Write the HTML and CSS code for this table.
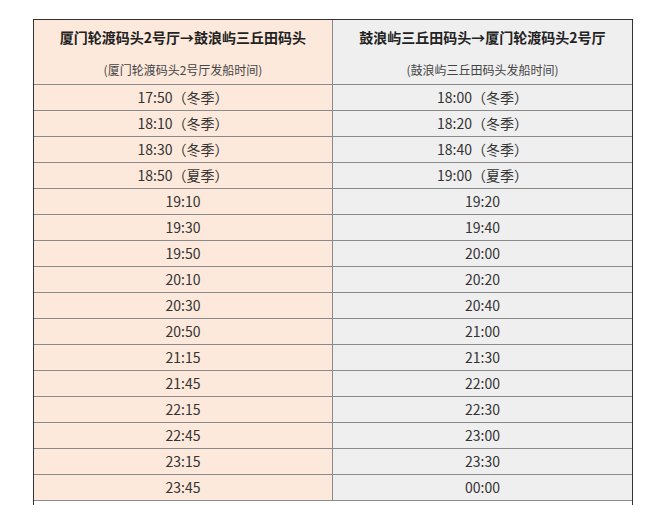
FILE: index.html
```html
<!DOCTYPE html>
<html lang="zh-CN">
<head>
<meta charset="utf-8">
<title>轮渡时刻表</title>
<link rel="stylesheet" href="styles.css">
</head>
<body>
<div class="page">
<table class="schedule">
  <thead>
    <tr>
      <th class="col-a">
        <div class="title">厦门轮渡码头2号厅→鼓浪屿三丘田码头</div>
        <div class="sub">(厦门轮渡码头2号厅发船时间)</div>
      </th>
      <th class="col-b">
        <div class="title">鼓浪屿三丘田码头→厦门轮渡码头2号厅</div>
        <div class="sub">(鼓浪屿三丘田码头发船时间)</div>
      </th>
    </tr>
  </thead>
  <tbody>
    <tr><td class="col-a">17:50（冬季）</td><td class="col-b">18:00（冬季）</td></tr>
    <tr><td class="col-a">18:10（冬季）</td><td class="col-b">18:20（冬季）</td></tr>
    <tr><td class="col-a">18:30（冬季）</td><td class="col-b">18:40（冬季）</td></tr>
    <tr><td class="col-a">18:50（夏季）</td><td class="col-b">19:00（夏季）</td></tr>
    <tr><td class="col-a">19:10</td><td class="col-b">19:20</td></tr>
    <tr><td class="col-a">19:30</td><td class="col-b">19:40</td></tr>
    <tr><td class="col-a">19:50</td><td class="col-b">20:00</td></tr>
    <tr><td class="col-a">20:10</td><td class="col-b">20:20</td></tr>
    <tr><td class="col-a">20:30</td><td class="col-b">20:40</td></tr>
    <tr><td class="col-a">20:50</td><td class="col-b">21:00</td></tr>
    <tr><td class="col-a">21:15</td><td class="col-b">21:30</td></tr>
    <tr><td class="col-a">21:45</td><td class="col-b">22:00</td></tr>
    <tr><td class="col-a">22:15</td><td class="col-b">22:30</td></tr>
    <tr><td class="col-a">22:45</td><td class="col-b">23:00</td></tr>
    <tr><td class="col-a">23:15</td><td class="col-b">23:30</td></tr>
    <tr><td class="col-a">23:45</td><td class="col-b">00:00</td></tr>
    <tr><td class="note" colspan="2">&nbsp;</td></tr>
  </tbody>
</table>
</div>
</body>
</html>
```
FILE: styles.css
```css
html, body {
  margin: 0;
  padding: 0;
  background: #ffffff;
}

.page {
  padding: 19px 0 0 33px;
}

.schedule {
  width: 600px;
  border-collapse: separate;
  border-spacing: 0;
  border: 1px solid #333333;
  border-bottom: none;
  table-layout: fixed;
  font-family: "Noto Sans CJK SC", "Noto Sans", sans-serif;
  color: #333333;
}

.schedule th,
.schedule td {
  padding: 0;
  text-align: center;
  border-bottom: 1px solid #8a8a8a;
}

.schedule th {
  height: 64px;
  vertical-align: top;
  font-weight: normal;
}

.schedule td {
  height: 25px;
  font-size: 14px;
  line-height: 25px;
  vertical-align: middle;
}

.col-a {
  width: 298px;
  background: #fde9db;
  border-right: 1px solid #8a8a8a;
}

.col-b {
  background: #efefef;
}

.title {
  padding-top: 7px;
  font-size: 14px;
  line-height: 20px;
  font-weight: bold;
  color: #222222;
}

.sub {
  margin-top: 13px;
  font-size: 12px;
  line-height: 20px;
  color: #444444;
}

.schedule td.note {
  background: #ffffff;
  height: 40px;
  border-bottom: 1px solid #333333;
}
```
